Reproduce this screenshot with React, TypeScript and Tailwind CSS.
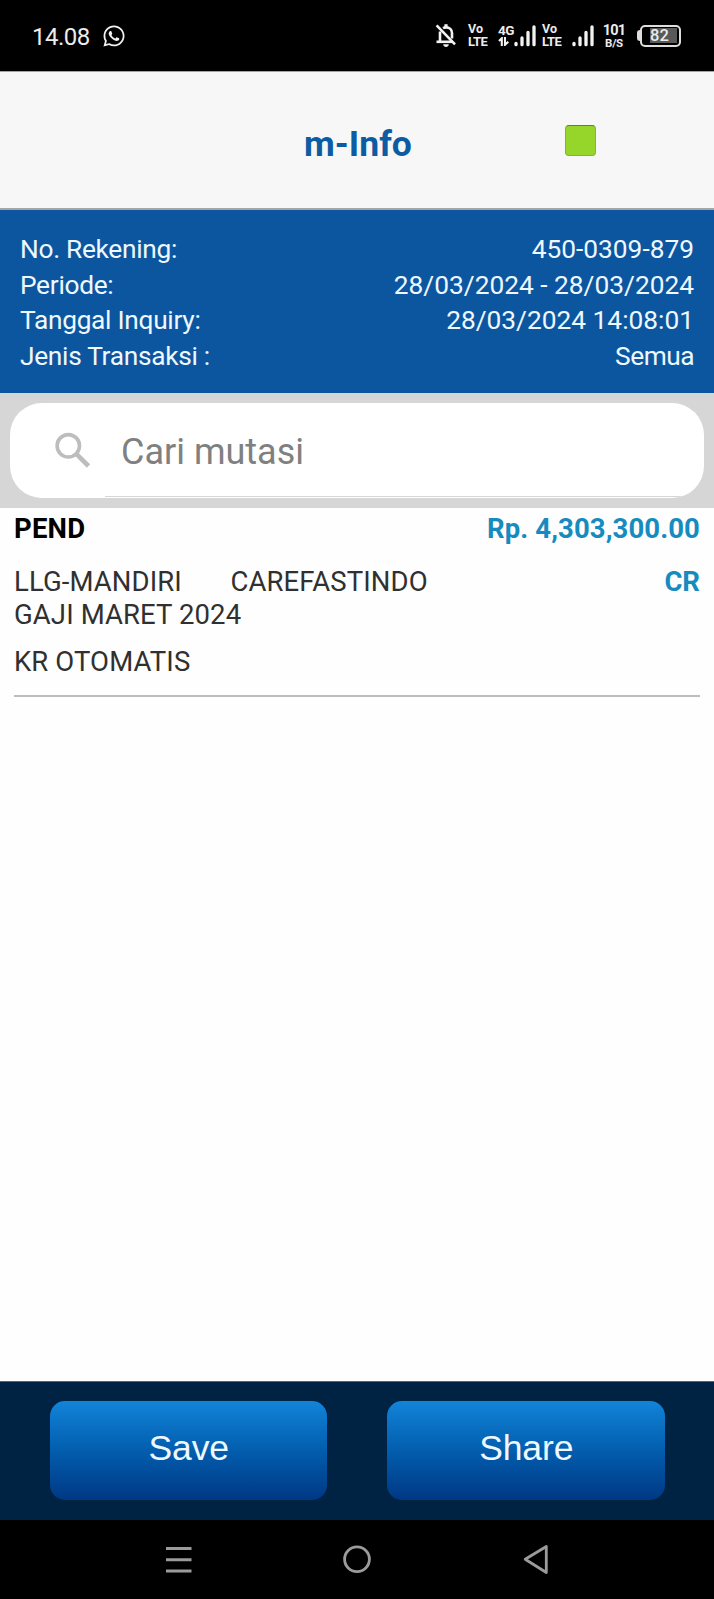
import type { ReactNode } from "react";
import { FaWhatsapp } from "react-icons/fa";

const inquiry = [
  { label: "No. Rekening:", value: "450-0309-879", valueClass: "" },
  { label: "Periode:", value: "28/03/2024 - 28/03/2024", valueClass: "" },
  { label: "Tanggal Inquiry:", value: "28/03/2024 14:08:01", valueClass: "" },
  { label: "Jenis Transaksi :", value: "Semua", valueClass: "tracking-[-0.5px]" },
];

function BellOff() {
  return (
    <svg className="mt-[23px] ml-[15px] h-6 w-[22px] shrink-0" viewBox="0 0 22 24" fill="none" stroke="#f2f2f2" strokeWidth="2.6">
      <path d="M5 8.5V18M17 15.5V10C17 6.8 14.5 4.4 11 4.4C9.9 4.4 8.9 4.7 8 5.2" />
      <path d="M1.5 18.8H17.5" />
      <path d="M11 1.2V4.5" strokeWidth="3.2" />
      <path d="M8.2 21.2H13.8C13.6 22.9 12.5 24 11 24S8.4 22.9 8.2 21.2Z" fill="#f2f2f2" stroke="none" />
      <path d="M1.6 2.4L20 21.4" />
    </svg>
  );
}

function VoLte() {
  return (
    <div className="mt-[23px] flex w-[21px] shrink-0 flex-col items-start font-bold text-[#ececec]">
      <span className="h-[12px] text-[12.5px] leading-[12px]">Vo</span>
      <span className="h-[12px] text-[13px] leading-[13px] tracking-[-0.6px]">LTE</span>
    </div>
  );
}

function Signal() {
  return (
    <svg className="mt-[24px] h-[23px] w-[22px] shrink-0" viewBox="0 0 22 23" stroke="#f2f2f2" strokeWidth="3.3" strokeLinecap="round">
      <path d="M2 19.3V20.7M8 14V20.7M14 8.5V20.7M20 2.8V20.7" />
    </svg>
  );
}

function StatusBar() {
  return (
    <div className="flex h-[71px] items-start bg-black text-[#ececec]">
      <span className="mt-[21px] ml-[32px] w-[70px] text-[24px] leading-[32px] tracking-[-0.5px]">14.08</span>
      <FaWhatsapp className="mt-[24px] ml-[1px] h-6 w-[22px] shrink-0 text-[#f2f2f2]" />
      <div className="w-[295px] shrink-0" />
      <BellOff />
      <div className="ml-[11px]"><VoLte /></div>
      <div className="mt-[24px] ml-[9px] flex w-[17px] shrink-0 flex-col font-bold">
        <span className="h-[13px] text-[13.5px] leading-[13px] tracking-[-0.6px]">4G</span>
        <svg className="h-[9px] w-[12px]" viewBox="0 0 12 9" fill="none" stroke="#f2f2f2" strokeWidth="2.1">
          <path d="M3.8 9V1.2L1 4M7 0V7.8L10.3 4.8" />
        </svg>
      </div>
      <div className="-ml-[1px]"><Signal /></div>
      <div className="ml-[6px]"><VoLte /></div>
      <div className="ml-[9px]"><Signal /></div>
      <div className="mt-[24px] ml-[9px] flex w-[22px] shrink-0 flex-col items-center font-bold">
        <span className="h-[13px] text-[14.5px] leading-[14px] tracking-[-0.8px]">101</span>
        <span className="h-[10px] text-[11.5px] leading-[12px] tracking-[-0.3px]">B/S</span>
      </div>
      <div className="mt-[24.5px] ml-[12px] flex shrink-0 items-center">
        <div className="h-[11px] w-[3px] rounded-l-sm bg-[#dedede]" />
        <div className="flex h-[22px] w-[41px] items-center rounded-[5px] border-2 border-[#dedede] p-[2px] pl-[8px]">
          <div className="flex h-[15px] w-full items-center bg-[#595959] text-[16.5px] leading-[15px] font-medium text-[#ececec]">82</div>
        </div>
      </div>
    </div>
  );
}

function ActionButton({ children }: { children: ReactNode }) {
  return (
    <button className="h-[99px] w-[277.5px] rounded-[15px] bg-linear-to-b from-[#1284d9] to-[#003884] pb-[4px] pl-[1px] font-['Liberation_Sans',sans-serif] text-[35.5px] leading-10 tracking-[-0.1px] text-[#eef8ff]">
      {children}
    </button>
  );
}

export default function App() {
  return (
    <div className="flex h-[1599px] w-[714px] flex-col overflow-hidden bg-[#fefefe] font-['Roboto',sans-serif]">
      <StatusBar />
      <header className="grid h-[139px] grid-cols-[1fr_auto_1fr] items-start border-t border-b-2 border-t-[#a8a3a3] border-b-[#a3a5a6] bg-[#f7f7f7]">
        <span />
        <h1 className="mt-[52px] pl-[2px] text-[35.5px] leading-10 font-bold text-[#0c5ca4]">m-Info</h1>
        <div className="mt-[53px] ml-[153px] h-[31px] w-[31px] rounded-[4px] border border-[#86b432] border-t-[#5f8528] bg-[#96d62b]" />
      </header>
      <section className="flex h-[183px] flex-col bg-[#0c569f] px-[20px] pt-[22px] text-[26.3px] leading-[35.7px] text-[#eef8ff]">
        {inquiry.map((row) => (
          <div key={row.label} className="flex justify-between">
            <span className="tracking-[-0.3px]">{row.label}</span>
            <span className={row.valueClass}>{row.value}</span>
          </div>
        ))}
      </section>
      <section className="h-[115px] bg-[#d6d6d6] px-[10px] pt-[9.5px]">
        <div className="relative flex h-[95.5px] items-center overflow-hidden rounded-[32px] bg-white">
          <svg className="ml-[44px] h-[36px] w-[37px]" viewBox="0 0 37 36" fill="none" stroke="#bdbdbd">
            <circle cx="14.3" cy="13.8" r="11.2" strokeWidth="3.6" />
            <path d="M22.3 21.8L34.5 34" strokeWidth="4.6" />
          </svg>
          <span className="mt-[3px] ml-[30px] text-[36px] leading-10 text-[#808080]">Cari mutasi</span>
          <div className="absolute right-0 bottom-[1px] left-[95px] h-px bg-[#d6d6d6]" />
        </div>
      </section>
      <main className="flex-1 px-[14px] pt-[5px] text-[27.5px] leading-[32.5px] text-[#303030]">
        <div className="flex justify-between font-bold">
          <span className="tracking-[0.2px] text-black">PEND</span>
          <span className="tracking-[0.1px] text-[#168bc0]">Rp. 4,303,300.00</span>
        </div>
        <div className="mt-[20.5px] flex justify-between">
          <div className="whitespace-pre tracking-[0.1px]">{"LLG-MANDIRI       CAREFASTINDO\nGAJI MARET 2024"}</div>
          <span className="font-bold text-[#168bc0]">CR</span>
        </div>
        <div className="mt-[15px] tracking-[0.1px]">KR OTOMATIS</div>
        <div className="mt-[16.5px] h-[2px] bg-[#bdbdbd]" />
      </main>
      <footer className="flex h-[139px] shrink-0 justify-between border-t border-[#496a78] bg-[#002344] px-[49.5px] pt-[18.5px]">
        <ActionButton>Save</ActionButton>
        <ActionButton>Share</ActionButton>
      </footer>
      <nav className="flex h-[79px] shrink-0 items-start justify-center gap-[149px] bg-black pt-[24px]">
        <svg className="h-[32px] w-[30px]" viewBox="0 0 30 32" stroke="#9b9b9b" strokeWidth="3">
          <path d="M3 4.5H28.5M3 15.8H28.5M3 27H28.5" />
        </svg>
        <svg className="h-[32px] w-[30px]" viewBox="0 0 30 32" stroke="#9b9b9b" strokeWidth="2.8" fill="none">
          <circle cx="15" cy="15.2" r="12.4" />
        </svg>
        <svg className="h-[32px] w-[30px]" viewBox="0 0 30 32" stroke="#9b9b9b" strokeWidth="2.8" strokeLinejoin="round" fill="none">
          <path d="M4.2 15.3L25.3 2.5V28.5Z" />
        </svg>
      </nav>
    </div>
  );
}
